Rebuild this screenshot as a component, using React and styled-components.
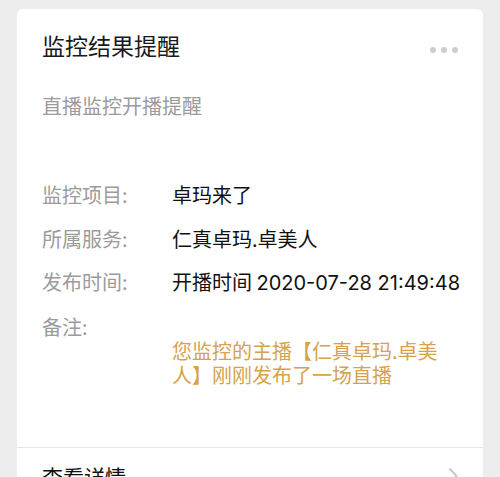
import React from "react";
import styled, { createGlobalStyle } from "styled-components";

const GlobalStyle = createGlobalStyle`
    html, body {
        margin: 0;
        padding: 0;
        height: 477px;
        overflow: hidden;
        background: #ededed;
        font-family: "Noto Sans CJK SC", "Noto Sans", sans-serif;
    }
`;

const Page = styled.div`
    padding: 9px 17px 0;
`;

const Card = styled.div`
    background: #fff;
    border-radius: 6px;
    overflow: hidden;
`;

const Body = styled.div`
    padding: 21px 25px 60px;
`;

const Header = styled.div`
    display: flex;
    justify-content: space-between;
    align-items: center;
`;

const Title = styled.div`
    font-size: 23px;
    line-height: 30px;
    color: #191919;
`;

const Dots = styled.div`
    display: flex;
    gap: 5px;
    margin-top: 10px;
`;

const Dot = styled.span`
    width: 6px;
    height: 6px;
    border-radius: 50%;
    background: #cdcdcd;
`;

const Subtitle = styled.div`
    margin-top: 32px;
    font-size: 20px;
    line-height: 28px;
    color: #9b9b9b;
`;

const Fields = styled.div`
    margin-top: 63px;
    display: grid;
    grid-template-columns: 130px 1fr;
    row-gap: 19.5px;
    font-size: 20px;
    line-height: 24px;
`;

const Label = styled.div`
    color: #9b9b9b;
`;

const Value = styled.div`
    color: #111;
    white-space: nowrap;
`;

const Num = styled.span`
    font-family: Inter, "Noto Sans CJK SC", sans-serif;
`;

const Note = styled.div`
    margin-left: 130px;
    max-width: 280px;
    font-size: 20px;
    line-height: 24px;
    color: #d6a24c;
`;

const Footer = styled.div`
    display: flex;
    justify-content: space-between;
    align-items: center;
    height: 56px;
    padding: 0 25px;
    border-top: 1px solid #e6e6e6;
    font-size: 21px;
    color: #111;
`;

const fields = [
    ["监控项目:", "卓玛来了"],
    ["所属服务:", "仁真卓玛.卓美人"],
    ["发布时间:", <>开播时间 <Num>2020-07-28 21:49:48</Num></>],
    ["备注:", ""],
];

const App = () => {
    return <>
        <GlobalStyle />
        <Page>
            <Card>
                <Body>
                    <Header>
                        <Title>监控结果提醒</Title>
                        <Dots><Dot /><Dot /><Dot /></Dots>
                    </Header>
                    <Subtitle>直播监控开播提醒</Subtitle>
                    <Fields>
                        {fields.map(([label, value]) => (
                            <React.Fragment key={label}>
                                <Label>{label}</Label>
                                <Value>{value}</Value>
                            </React.Fragment>
                        ))}
                    </Fields>
                    <Note>您监控的主播【仁真卓玛.卓美人】刚刚发布了一场直播</Note>
                </Body>
                <Footer>
                    <span>查看详情</span>
                    <svg width="10" height="18" viewBox="0 0 10 18">
                        <polyline points="1.5,1.5 8.5,9 1.5,16.5" fill="none" stroke="#c7c7cc" strokeWidth="2" />
                    </svg>
                </Footer>
            </Card>
        </Page>
    </>
}

export default App
